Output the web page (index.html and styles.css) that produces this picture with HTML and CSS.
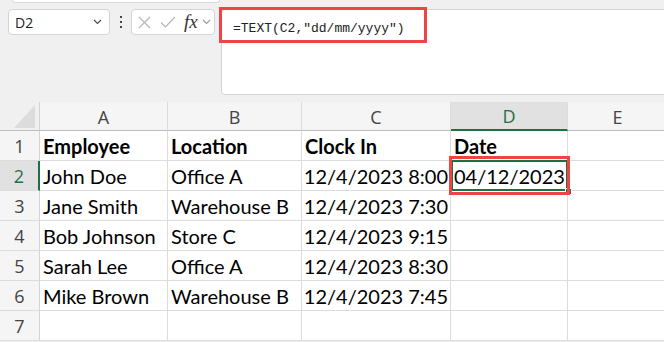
FILE: index.html
```html
<!DOCTYPE html>
<html lang="en">
<head>
    <meta charset="UTF-8">
    <meta name="viewport" content="width=device-width, initial-scale=1.0">
    <title>TEXT date format</title>
    <link rel="stylesheet" href="styles.css">
</head>
<body>

<div class="app">
    <div class="ribbon-edge"></div>

    <div class="formula-row">
        <div class="name-box">
            <span>D2</span>
            <svg class="chev" width="9" height="6" viewBox="0 0 9 6"><path d="M1 1l3.5 3.5L8 1" fill="none" stroke="#444" stroke-width="1.1"/></svg>
        </div>
        <div class="grip"><i></i><i></i><i></i></div>
        <div class="fx-box">
            <svg width="13" height="13" viewBox="0 0 13 13"><path d="M1 1l11 11M12 1L1 12" stroke="#b3b3b3" stroke-width="1.1"/></svg>
            <svg width="16" height="12" viewBox="0 0 16 12"><path d="M1 6.5l4.5 4.5L15 1" fill="none" stroke="#b3b3b3" stroke-width="1.1"/></svg>
            <span class="fx">fx</span>
            <svg class="chev" width="9" height="6" viewBox="0 0 9 6"><path d="M1 1l3.5 3.5L8 1" fill="none" stroke="#999" stroke-width="1.1"/></svg>
        </div>
        <div class="formula-bar">
            <span class="formula">=TEXT(C2,"dd/mm/yyyy")</span>
            <div class="mark mark-formula"></div>
        </div>
    </div>

    <div class="sheet">
        <div class="corner">
            <svg width="21" height="23" viewBox="0 0 21 23"><path d="M21 0V23H0Z" fill="#dcdcdc"/></svg>
        </div>
        <div class="col-head">A</div>
        <div class="col-head">B</div>
        <div class="col-head">C</div>
        <div class="col-head is-active">D</div>
        <div class="col-head">E</div>

        <div class="row-head">1</div>
        <div class="cell bold">Employee</div>
        <div class="cell bold">Location</div>
        <div class="cell bold">Clock In</div>
        <div class="cell bold">Date</div>
        <div class="cell"></div>

        <div class="row-head is-active">2</div>
        <div class="cell">John Doe</div>
        <div class="cell">Office A</div>
        <div class="cell num">12/4/2023 8:00</div>
        <div class="cell selected">04/12/2023<div class="mark mark-cell"></div></div>
        <div class="cell"></div>

        <div class="row-head">3</div>
        <div class="cell">Jane Smith</div>
        <div class="cell">Warehouse B</div>
        <div class="cell num">12/4/2023 7:30</div>
        <div class="cell"></div>
        <div class="cell"></div>

        <div class="row-head">4</div>
        <div class="cell">Bob Johnson</div>
        <div class="cell">Store C</div>
        <div class="cell num">12/4/2023 9:15</div>
        <div class="cell"></div>
        <div class="cell"></div>

        <div class="row-head">5</div>
        <div class="cell">Sarah Lee</div>
        <div class="cell">Office A</div>
        <div class="cell num">12/4/2023 8:30</div>
        <div class="cell"></div>
        <div class="cell"></div>

        <div class="row-head">6</div>
        <div class="cell">Mike Brown</div>
        <div class="cell">Warehouse B</div>
        <div class="cell num">12/4/2023 7:45</div>
        <div class="cell"></div>
        <div class="cell"></div>

        <div class="row-head">7</div>
        <div class="cell"></div>
        <div class="cell"></div>
        <div class="cell"></div>
        <div class="cell"></div>
        <div class="cell"></div>
    </div>
</div>

</body>
</html>
```

FILE: styles.css
```css
body {
    margin: 0;
    padding: 0;
    background: #f0f0f0;
    width: 664px;
    height: 342px;
    overflow: hidden;
    font-family: 'Open Sans', sans-serif;
}

.app {
    width: 664px;
    height: 342px;
    overflow: hidden;
}

.ribbon-edge {
    margin-left: 12px;
    width: 206px;
    height: 2px;
    background: #fff;
    border: 1px solid #dadada;
    border-top: none;
    border-radius: 0 0 4px 4px;
}

/* formula bar row */
.formula-row {
    display: flex;
    align-items: flex-start;
    margin-top: 6px;
    padding-left: 8px;
}
.name-box {
    box-sizing: border-box;
    width: 102px;
    height: 26px;
    background: #fff;
    border: 1px solid #d4d4d4;
    border-radius: 4px;
    display: flex;
    align-items: center;
    justify-content: space-between;
    padding: 0 7px 0 6px;
    font-size: 14px;
    color: #222;
}
.chev {
    display: block;
}
.grip {
    width: 21px;
    height: 26px;
    display: flex;
    flex-direction: column;
    align-items: center;
    justify-content: center;
    gap: 3px;
}
.grip i {
    display: block;
    width: 2px;
    height: 2px;
    background: #444;
}
.fx-box {
    box-sizing: border-box;
    width: 84px;
    height: 26px;
    background: #fff;
    border: 1px solid #d4d4d4;
    border-radius: 4px;
    display: flex;
    align-items: center;
    padding: 0 3px 0 6px;
    gap: 9px;
}
.fx-box .fx {
    font-family: 'Liberation Serif', serif;
    font-style: italic;
    font-size: 19px;
    color: #333;
    line-height: 1;
    margin-left: -1px;
    margin-right: -5px;
    padding-bottom: 2px;
}
.formula-bar {
    position: relative;
    box-sizing: border-box;
    flex: 1;
    height: 86px;
    margin-left: 6px;
    margin-right: -4px;
    background: #fff;
    border: 1px solid #d4d4d4;
    border-radius: 4px;
    padding: 5px 0 0 11px;
}
.formula {
    font-family: 'Liberation Mono', monospace;
    font-size: 13px;
    line-height: 18px;
    color: #222;
}

/* red annotation frames */
.mark {
    position: absolute;
    box-sizing: border-box;
    border: 3px solid #ee4444;
    pointer-events: none;
}
.mark-formula {
    left: -3px;
    top: -3px;
    width: 208px;
    height: 36px;
}
.mark-cell {
    left: -2px;
    top: -5px;
    width: 121px;
    height: 39px;
    z-index: 3;
}

/* worksheet grid */
.sheet {
    margin-top: 7px;
    display: grid;
    grid-template-columns: 40px 128px 134px 149px 117px 100px;
    grid-template-rows: 29px repeat(7, 30px) 10px;
}
.corner {
    box-sizing: border-box;
    border-right: 1px solid #d4d4d4;
    border-bottom: 1px solid #bdbdbd;
    display: flex;
    align-items: flex-end;
    justify-content: flex-end;
    padding: 0 4px 2px 0;
}
.corner svg {
    display: block;
}
.col-head {
    box-sizing: border-box;
    background: #f5f5f5;
    border-right: 1px solid #dcdcdc;
    border-bottom: 1px solid #bdbdbd;
    display: flex;
    align-items: center;
    justify-content: center;
    font-size: 18px;
    color: #444;
    padding-top: 1px;
}
.col-head.is-active {
    background: #e1e1e1;
    color: #1d7044;
    border-bottom: 2px solid #1d7044;
}
.row-head {
    box-sizing: border-box;
    background: #f5f5f5;
    border-right: 1px solid #d4d4d4;
    border-bottom: 1px solid #dcdcdc;
    display: flex;
    align-items: center;
    justify-content: center;
    font-size: 18px;
    color: #444;
    padding-top: 1px;
}
.row-head.is-active {
    background: #e1e1e1;
    color: #1d7044;
    border-right: 2px solid #1d7044;
}
.cell {
    position: relative;
    box-sizing: border-box;
    background: #fff;
    border-right: 1px solid #dcdcdc;
    border-bottom: 1px solid #dcdcdc;
    display: flex;
    align-items: flex-end;
    padding: 0 2px 2px 3px;
    font-family: 'Lato', sans-serif;
    font-size: 20px;
    line-height: 24px;
    color: #000;
    white-space: nowrap;
}
.cell.bold {
    font-weight: bold;
}
.cell.num {
    justify-content: flex-end;
}
.cell.selected {
    z-index: 2;
}
.cell.selected::before {
    content: '';
    position: absolute;
    left: 0;
    top: -1px;
    width: 117px;
    height: 31px;
    box-sizing: border-box;
    border: 2px solid #1d7044;
}
.cell.selected::after {
    content: '';
    position: absolute;
    left: 114px;
    top: 27px;
    width: 5px;
    height: 5px;
    background: #1d7044;
    border: 1px solid #fff;
}
```
